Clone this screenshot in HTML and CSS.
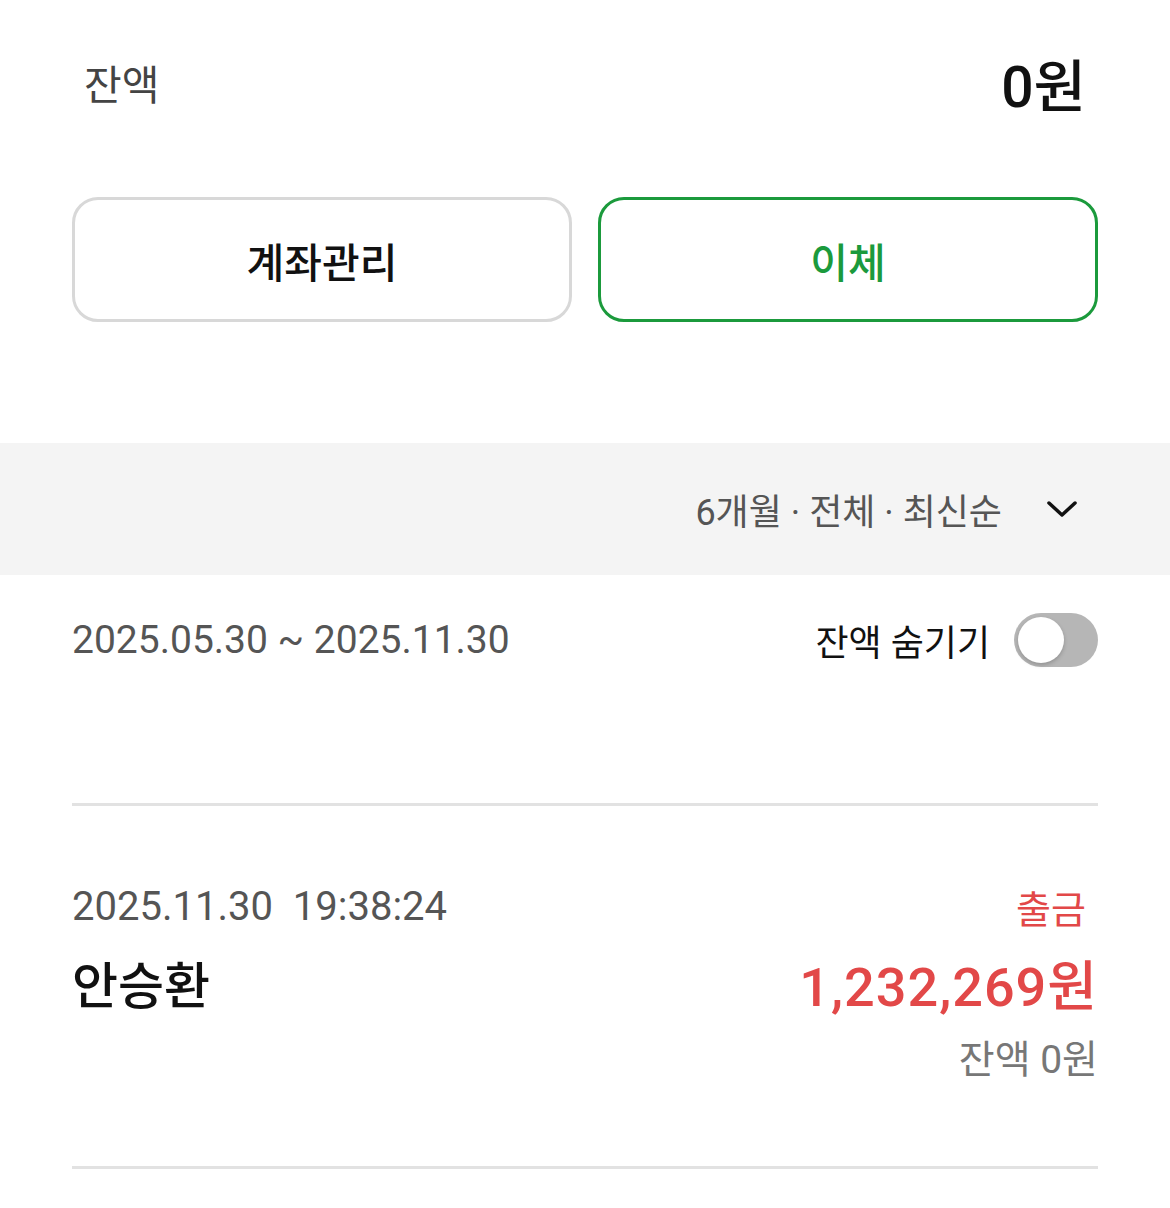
FILE: index.html
```html
<!DOCTYPE html>
<html lang="ko">
<head>
    <meta charset="UTF-8">
    <meta name="viewport" content="width=device-width, initial-scale=1.0">
    <title>계좌 내역</title>
    <link rel="stylesheet" href="styles.css">
</head>
<body>
    <div class="summary">
        <span class="summary-label">잔액</span>
        <span class="summary-amount">0원</span>
    </div>

    <div class="actions">
        <button class="btn">계좌관리</button>
        <button class="btn btn-primary">이체</button>
    </div>

    <div class="filter-bar">
        <span class="filter-text">6개월 · 전체 · 최신순</span>
        <svg class="chevron" width="32" height="20" viewBox="0 0 32 20">
            <path d="M3 4 L16 16 L29 4" fill="none" stroke="#111" stroke-width="3.5" stroke-linecap="round" stroke-linejoin="round"/>
        </svg>
    </div>

    <div class="period">
        <span class="period-range">2025.05.30 ~ 2025.11.30</span>
        <label class="hide-balance">
            <span>잔액 숨기기</span>
            <span class="toggle"><span class="knob"></span></span>
        </label>
    </div>

    <div class="list">
        <div class="tx">
            <div class="tx-row tx-meta">
                <span class="tx-date">2025.11.30&nbsp;&nbsp;19:38:24</span>
                <span class="tx-type">출금</span>
            </div>
            <div class="tx-row tx-main">
                <span class="tx-name">안승환</span>
                <span class="tx-amount">1,232,269원</span>
            </div>
            <div class="tx-balance">잔액 0원</div>
        </div>
    </div>
</body>
</html>
```

FILE: styles.css
```css
body {
    margin: 0;
    background-color: #fff;
    color: #111;
    font-family: Roboto, "Noto Sans CJK KR", sans-serif;
}
.summary {
    height: 164px;
    padding: 0 84px;
    display: flex;
    align-items: center;
    justify-content: space-between;
}
.summary-label {
    font-size: 41px;
    color: #444;
}
.summary-amount {
    font-size: 57px;
    font-weight: 500;
    color: #111;
}
.actions {
    display: grid;
    grid-template-columns: 1fr 1fr;
    gap: 26px;
    padding: 0 72px;
    margin-top: 33px;
}
.btn {
    height: 125px;
    background-color: #fff;
    border: 3px solid #d8d8d8;
    border-radius: 26px;
    font-family: inherit;
    font-size: 41px;
    font-weight: 500;
    color: #111;
}
.btn-primary {
    border-color: #1b9a3c;
    color: #1b9a3c;
}
.filter-bar {
    margin-top: 121px;
    height: 132px;
    background-color: #f4f4f4;
    display: flex;
    align-items: center;
    justify-content: flex-end;
    padding-right: 92px;
    gap: 44px;
}
.filter-text {
    font-size: 36px;
    color: #555;
}
.period {
    height: 130px;
    padding: 0 72px;
    display: flex;
    align-items: center;
    justify-content: space-between;
}
.period-range {
    font-size: 39px;
    color: #555;
}
.hide-balance {
    display: flex;
    align-items: center;
    gap: 24px;
    font-size: 36px;
    color: #111;
}
.toggle {
    width: 84px;
    height: 54px;
    border-radius: 27px;
    background-color: #b6b6b6;
    display: flex;
    align-items: center;
    padding: 0 4px;
    box-sizing: border-box;
}
.knob {
    width: 46px;
    height: 46px;
    border-radius: 50%;
    background-color: #fff;
    box-shadow: 0 2px 4px rgba(0, 0, 0, 0.2);
}
.list {
    margin-top: 98px;
    padding: 0 72px;
}
.tx {
    border-top: 3px solid #e2e2e2;
    border-bottom: 3px solid #e2e2e2;
    padding: 75px 0 81px;
}
.tx-row {
    display: flex;
    align-items: center;
    justify-content: space-between;
}
.tx-meta {
    height: 50px;
}
.tx-date {
    font-size: 40px;
    color: #555;
}
.tx-type {
    font-size: 38px;
    color: #e24848;
    padding-right: 12px;
}
.tx-main {
    height: 60px;
    margin-top: 21px;
}
.tx-name {
    font-size: 50px;
    font-weight: 500;
    color: #111;
}
.tx-amount {
    font-size: 54px;
    font-weight: 500;
    letter-spacing: 1px;
    color: #e24848;
}
.tx-balance {
    margin-top: 23px;
    height: 50px;
    line-height: 50px;
    text-align: right;
    font-size: 39px;
    color: #777;
}
```
